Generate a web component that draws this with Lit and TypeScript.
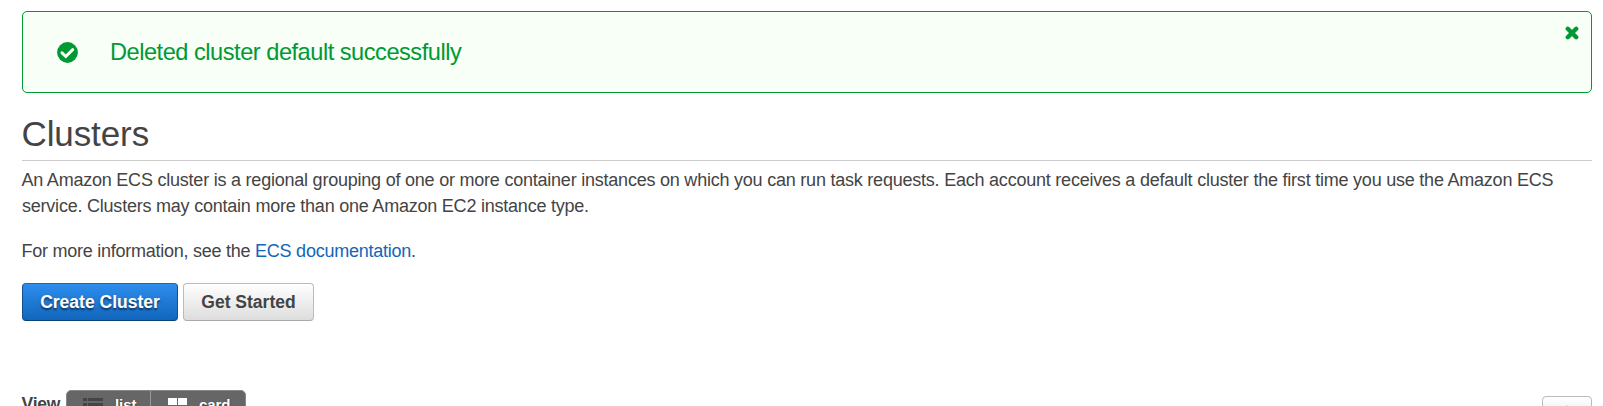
import { LitElement, html, css } from "lit";
import { customElement } from "lit/decorators.js";

@customElement("app-root")
export class AppRoot extends LitElement {
  static styles = css`
    :host {
      display: block;
      height: 406px;
      overflow: hidden;
      box-sizing: border-box;
      padding: 11px 11px 0 22px;
      background: #fff;
      color: #444;
      font: 18px/26px "Liberation Sans", Arial, sans-serif;
      letter-spacing: -0.223px;
    }
    .alert {
      display: flex;
      align-items: center;
      box-sizing: border-box;
      height: 82px;
      padding: 0 12px 0 34px;
      border: 1px solid #093;
      border-radius: 5px;
      background: #f7fff7;
      color: #093;
    }
    .check { width: 21px; height: 21px; flex: none; }
    .message {
      flex: 1;
      margin-left: 32px;
      font-size: 23.6px;
      line-height: 30px;
      letter-spacing: -0.48px;
      white-space: nowrap;
    }
    .close { width: 14px; height: 14px; align-self: flex-start; margin-top: 14px; }
    h1 {
      margin: 17px 0 6px;
      height: 50px;
      border-bottom: 1px solid #ccc;
      font-size: 35px;
      line-height: 48px;
      letter-spacing: -0.1px;
      text-indent: -0.5px;
      font-weight: 400;
    }
    p { margin: 0 0 19px; text-indent: -0.5px; white-space: nowrap; }
    .more { letter-spacing: -0.25px; }
    a { color: #1166bb; text-decoration: none; }
    .actions { display: flex; gap: 5px; }
    .button {
      box-sizing: border-box;
      height: 38px;
      padding: 0;
      border: 1px solid #bbb;
      border-bottom-color: #aaa;
      border-radius: 4px;
      background: linear-gradient(#fff, #ddd);
      color: #444;
      font: bold 17.5px/35px "Liberation Sans", Arial, sans-serif;
      text-align: center;
    }
    .create {
      width: 156px;
      border-color: #1a67b4 #12508f #0c4178;
      background: linear-gradient(#2e8ded, #1166bb);
      color: #fff;
      text-shadow: 0 2px 2px rgba(0, 0, 0, 0.55);
    }
    .start { width: 131px; }
    .toolbar { display: flex; justify-content: space-between; align-items: flex-start; margin-top: 69px; }
    .view { display: flex; }
    .label { width: 44px; font-weight: bold; font-size: 17.5px; line-height: 28px; text-indent: -0.5px; }
    .toggle {
      display: flex;
      box-sizing: border-box;
      width: 180px;
      height: 35px;
      border: 1px solid #888;
      border-radius: 5px;
      background: #666;
      color: #fff;
      font-weight: bold;
      font-size: 15px;
      line-height: 27px;
      letter-spacing: -0.1px;
      text-shadow: 0 1px 2px rgba(0, 0, 0, 0.5);
    }
    .option { display: flex; box-sizing: border-box; padding-left: 16px; }
    .option svg { flex: none; margin-top: 7px; }
    .list { width: 84px; border-right: 1px solid #999; }
    .list svg { margin-right: 12px; }
    .card { padding-left: 17px; }
    .card svg { margin-right: 12px; }
    .refresh {
      display: flex;
      justify-content: center;
      box-sizing: border-box;
      width: 50px;
      height: 38px;
      margin-top: 6px;
      padding-top: 8px;
      border: 1px solid #bbb;
      border-radius: 4px;
      background: linear-gradient(#fff, #ddd);
    }
  `;

  render() {
    return html`
      <div class="alert">
        <svg class="check" viewBox="0 0 21 21">
          <circle cx="10.5" cy="10.5" r="10.4" fill="#093" />
          <path d="M5 10.9 L8.8 14.5 L15.7 7.6" fill="none" stroke="#f7fff7" stroke-width="3" stroke-linecap="round" />
        </svg>
        <span class="message">Deleted cluster default successfully</span>
        <svg class="close" viewBox="0 0 14 14">
          <path d="M2.8 2.8 L11.2 11.2 M11.2 2.8 L2.8 11.2" stroke="#093" stroke-width="4.4" stroke-linecap="round" />
        </svg>
      </div>
      <h1>Clusters</h1>
      <p>
        An Amazon ECS cluster is a regional grouping of one or more container instances on which you can run task requests. Each account receives a default cluster the first time you use the Amazon ECS<br />
        service. Clusters may contain more than one Amazon EC2 instance type.
      </p>
      <p class="more">For more information, see the <a>ECS documentation</a>.</p>
      <div class="actions">
        <button class="button create">Create Cluster</button>
        <button class="button start">Get Started</button>
      </div>
      <div class="toolbar">
        <div class="view">
          <span class="label">View</span>
          <div class="toggle">
            <span class="option list">
              <svg width="20" height="14" viewBox="0 0 20 14" fill="#444">
                <path d="M0 0h4v3H0zM5 0h15v3H5zM0 5h4v3H0zM5 5h15v3H5zM0 10h4v3H0zM5 10h15v3H5z" />
              </svg>list
            </span>
            <span class="option card">
              <svg width="19" height="16" viewBox="0 0 19 16" fill="#fff">
                <path d="M0 0h9v7H0zM10 0h9v7h-9zM0 8h9v7H0zM10 8h9v7h-9z" />
              </svg>card
            </span>
          </div>
        </div>
        <div class="refresh">
          <svg width="16" height="16" viewBox="0 0 16 16" fill="none" stroke="#888" stroke-width="2">
            <path d="M14 7.4a6 6 0 1 1-2-4.1M14 2.5v3.5h-4" />
          </svg>
        </div>
      </div>
    `;
  }
}
